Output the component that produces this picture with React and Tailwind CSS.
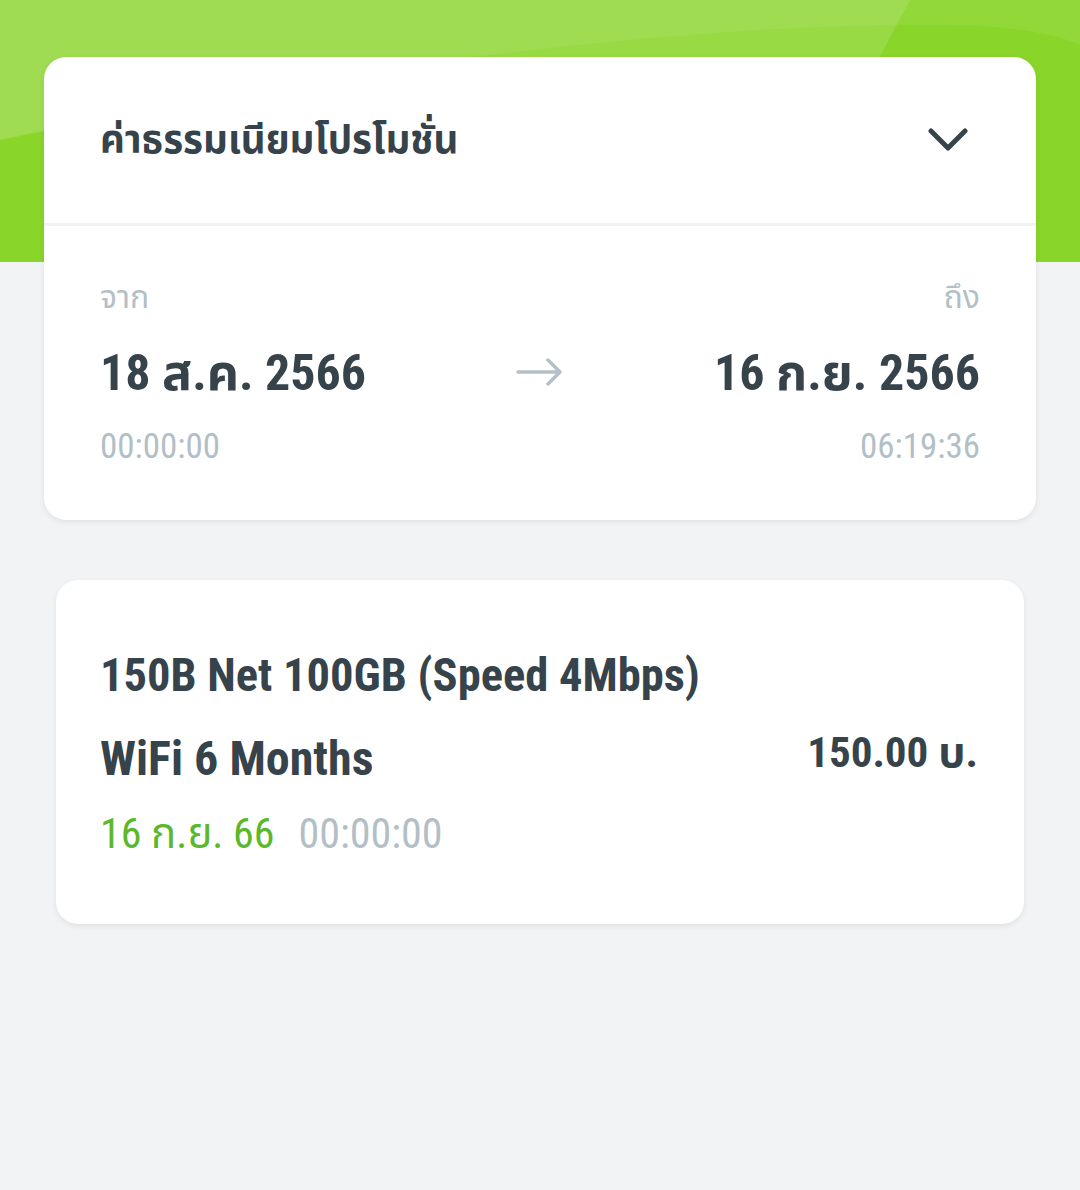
const FONT = "font-['Roboto','Noto_Sans_Thai',sans-serif] font-stretch-condensed";

function HeaderBg() {
  return (
    <svg className="block h-full w-full" viewBox="0 0 1080 262" preserveAspectRatio="none">
      <rect x="0" y="0" width="1080" height="262" fill="#8ad52a" />
      <path d="M0,0 H1080 V45 C1060,35 1020,27 960,25 C700,20 300,70 0,140 Z" fill="#ffffff" fillOpacity="0.07" />
      <path d="M0,0 H910 L878,60 C600,60 300,80 0,140 Z" fill="#ffffff" fillOpacity="0.12" />
    </svg>
  );
}

function Chevron() {
  return (
    <svg width="40" height="24" viewBox="0 0 40 24" fill="none">
      <path d="M3 3 L20 20 L37 3" stroke="#36434b" strokeWidth="5" strokeLinecap="round" strokeLinejoin="round" />
    </svg>
  );
}

function Arrow() {
  return (
    <svg width="48" height="28" viewBox="0 0 48 28" fill="none">
      <path d="M2 14 H44 M32 2 L44 14 L32 26" stroke="#b4c1c8" strokeWidth="3.5" strokeLinecap="round" strokeLinejoin="round" />
    </svg>
  );
}

export default function App() {
  return (
    <div className={`min-h-[1190px] w-[1080px] bg-[#f2f3f5] ${FONT}`}>
      <div className="h-[262px] w-full">
        <HeaderBg />
      </div>
      <div className="-mt-[205px] flex flex-col">
        <div className="mx-[44px] overflow-hidden rounded-[22px] bg-white shadow-[0_2px_6px_rgba(0,0,0,0.08)]">
          <div className="flex h-[166px] items-center justify-between pl-[56px] pr-[68px]">
            <span className="text-[38.5px] font-bold leading-[48px] text-[#36434b]">ค่าธรรมเนียมโปรโมชั่น</span>
            <Chevron />
          </div>
          <div className="h-[3px] bg-[#f1f2f4]" />
          <div className="grid grid-cols-[1fr_auto_1fr] items-center px-[56px] pb-[53px] pt-[51px]">
            <div className="flex flex-col items-start">
              <span className="text-[32px] leading-[40px] text-[#b3bfc6]">จาก</span>
              <span className="mt-[26px] text-[50px] font-bold leading-[60px] text-[#36434b]">18 ส.ค. 2566</span>
              <span className="mt-[24px] text-[35px] leading-[40px] text-[#b3bfc6]">00:00:00</span>
            </div>
            <Arrow />
            <div className="flex flex-col items-end">
              <span className="text-[32px] leading-[40px] text-[#b3bfc6]">ถึง</span>
              <span className="mt-[26px] text-[50px] font-bold leading-[60px] text-[#36434b]">16 ก.ย. 2566</span>
              <span className="mt-[24px] text-[35px] leading-[40px] text-[#b3bfc6]">06:19:36</span>
            </div>
          </div>
        </div>

        <div className="mx-[56px] mt-[60px] flex h-[344px] items-center justify-between rounded-[22px] bg-white pl-[44px] pr-[46px] shadow-[0_2px_6px_rgba(0,0,0,0.08)]">
          <div className="flex flex-col">
            <span className="text-[46.5px] font-bold leading-[56px] text-[#36434b]">150B Net 100GB (Speed 4Mbps)</span>
            <span className="mt-[28px] text-[48px] font-bold leading-[56px] text-[#36434b]">WiFi 6 Months</span>
            <div className="mt-[23px] flex items-center gap-[24px] text-[42px] leading-[48px]">
              <span className="text-[#5cb82a]">16 ก.ย. 66</span>
              <span className="text-[#b3bfc6]">00:00:00</span>
            </div>
          </div>
          <span className="text-[43px] font-bold leading-[56px] text-[#36434b]">150.00 บ.</span>
        </div>
      </div>
    </div>
  );
}
